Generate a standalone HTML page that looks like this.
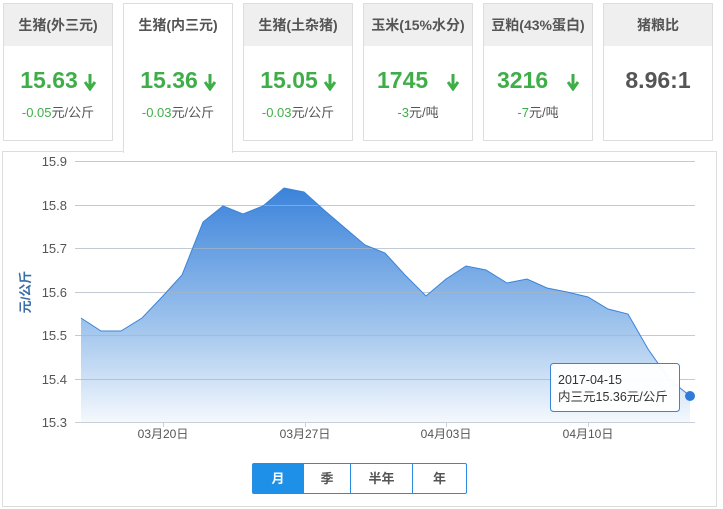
<!DOCTYPE html>
<html><head><meta charset="utf-8"><style>
*{margin:0;padding:0;box-sizing:border-box}
body{width:723px;height:509px;background:#fff;font-family:"Liberation Sans","Noto Sans CJK SC",sans-serif;position:relative;overflow:hidden}
.card{position:absolute;top:3px;width:110px;height:138px;border:1px solid #ddd;background:#fff;text-align:center}
.card .h{height:42px;background:#efefef;color:#555;font-weight:bold;font-size:14px;line-height:42px}
.card .v{margin-top:20px;font-size:23px;font-weight:bold;color:#3fae49;height:28px;line-height:28px}
.card .v .ar{display:inline-block;vertical-align:middle;margin-left:6px}
.card .d{margin-top:8px;font-size:13px;color:#555}
.card .d b{font-weight:normal;color:#3fae49}
.card.act{height:150px;border-bottom:none;z-index:2}
.card.act .h{background:#fff}
.panel{position:absolute;left:2px;top:151px;width:715px;height:356px;border:1px solid #ddd}
.btns{position:absolute;left:252px;top:463px;height:31px;width:215px;border:1px solid #2a8ce0;border-radius:2px;display:flex;font-size:13px;font-weight:bold;color:#555;background:#fff}
.btns div{text-align:center;line-height:29px;border-right:1px solid #2a8ce0}
.btns div:last-child{border-right:none}
</style></head><body>
<div class="panel"></div>
<div class="card" style="left:3px"><div class="h">生猪(外三元)</div><div class="v">15.63<svg class="ar" width="12" height="18" viewBox="0 0 12 18"><path d="M6 1v13M1 9l5 7 5-7" stroke="#3fae49" stroke-width="3" fill="none"/></svg></div><div class="d"><b>-0.05</b>元/公斤</div></div>
<div class="card act" style="left:123px"><div class="h">生猪(内三元)</div><div class="v">15.36<svg class="ar" width="12" height="18" viewBox="0 0 12 18"><path d="M6 1v13M1 9l5 7 5-7" stroke="#3fae49" stroke-width="3" fill="none"/></svg></div><div class="d"><b>-0.03</b>元/公斤</div></div>
<div class="card" style="left:243px"><div class="h">生猪(土杂猪)</div><div class="v">15.05<svg class="ar" width="12" height="18" viewBox="0 0 12 18"><path d="M6 1v13M1 9l5 7 5-7" stroke="#3fae49" stroke-width="3" fill="none"/></svg></div><div class="d"><b>-0.03</b>元/公斤</div></div>
<div class="card" style="left:363px"><div class="h">玉米(15%水分)</div><div class="v">1745 &nbsp;<svg class="ar" width="12" height="18" viewBox="0 0 12 18"><path d="M6 1v13M1 9l5 7 5-7" stroke="#3fae49" stroke-width="3" fill="none"/></svg></div><div class="d"><b>-3</b>元/吨</div></div>
<div class="card" style="left:483px"><div class="h">豆粕(43%蛋白)</div><div class="v">3216 &nbsp;<svg class="ar" width="12" height="18" viewBox="0 0 12 18"><path d="M6 1v13M1 9l5 7 5-7" stroke="#3fae49" stroke-width="3" fill="none"/></svg></div><div class="d"><b>-7</b>元/吨</div></div>
<div class="card" style="left:603px"><div class="h">猪粮比</div><div class="v" style="color:#555">8.96:1</div></div>

<svg style="position:absolute;left:0;top:0" width="723" height="509">
<defs><linearGradient id="g" gradientUnits="userSpaceOnUse" x1="0" y1="186" x2="0" y2="422"><stop offset="0" stop-color="#2f7bd8"/><stop offset="0.6" stop-color="#9cc2ec"/><stop offset="1" stop-color="#f4f8fd"/></linearGradient></defs>
<path d="M81 318L101 331L121 331L142 318L162 297L182 275L203 222L223 206L243 214L263 206L284 188L304 192L324 210L345 228L365 245L385 253L405 275L426 296L446 279L466 266L486 270L507 283L527 279L547 288L567 292L588 297L608 309L628 314L648 349L669 379L690 396L690 422L81 422Z" fill="url(#g)" fill-opacity="0.95"/>
<g stroke="#a8b4c4" stroke-opacity="0.7" stroke-width="1">
<line x1="75" y1="161.5" x2="695" y2="161.5"/><line x1="75" y1="205.5" x2="695" y2="205.5"/><line x1="75" y1="248.5" x2="695" y2="248.5"/><line x1="75" y1="292.5" x2="695" y2="292.5"/><line x1="75" y1="335.5" x2="695" y2="335.5"/><line x1="75" y1="379.5" x2="695" y2="379.5"/>
</g>
<path d="M81 318L101 331L121 331L142 318L162 297L182 275L203 222L223 206L243 214L263 206L284 188L304 192L324 210L345 228L365 245L385 253L405 275L426 296L446 279L466 266L486 270L507 283L527 279L547 288L567 292L588 297L608 309L628 314L648 349L669 379L690 396" fill="none" stroke="#3a84d8" stroke-width="1"/>
<line x1="75" y1="422.5" x2="695" y2="422.5" stroke="#c8d0dc"/>
<g stroke="#c8d0dc"><line x1="163.5" y1="422" x2="163.5" y2="427"/><line x1="305.5" y1="422" x2="305.5" y2="427"/><line x1="446.5" y1="422" x2="446.5" y2="427"/><line x1="588.5" y1="422" x2="588.5" y2="427"/></g>
<circle cx="690" cy="396" r="5" fill="#2f7bd8"/>
<g font-family="Liberation Sans,Noto Sans CJK SC,sans-serif" font-size="13" fill="#555" text-anchor="end">
<text x="67" y="166">15.9</text><text x="67" y="210">15.8</text><text x="67" y="253">15.7</text><text x="67" y="297">15.6</text><text x="67" y="340">15.5</text><text x="67" y="384">15.4</text><text x="67" y="427">15.3</text>
</g>
<g font-family="Liberation Sans,Noto Sans CJK SC,sans-serif" font-size="12" fill="#555" text-anchor="middle">
<text x="163" y="438">03月20日</text><text x="305" y="438">03月27日</text><text x="446" y="438">04月03日</text><text x="588" y="438">04月10日</text>
</g>
<text transform="translate(30,292) rotate(-90)" text-anchor="middle" font-family="Liberation Sans,Noto Sans CJK SC,sans-serif" font-size="13" font-weight="bold" fill="#3a6ea8">元/公斤</text>
<rect x="550.5" y="363.5" width="129" height="48" rx="3" fill="#fff" fill-opacity="0.95" stroke="#3a84d8"/>
<g font-family="Liberation Sans,Noto Sans CJK SC,sans-serif" font-size="12.5" fill="#333">
<text x="558" y="384">2017-04-15</text><text x="558" y="401">内三元15.36元/公斤</text>
</g>
</svg>
<div class="btns"><div style="width:51px;background:#1e90e8;color:#fff">月</div><div style="width:47px">季</div><div style="width:62px">半年</div><div style="flex:1">年</div></div>
</body></html>
